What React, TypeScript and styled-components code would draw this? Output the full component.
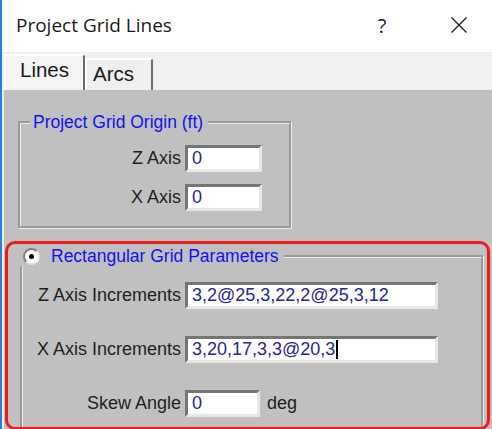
import React from "react";
import styled, { createGlobalStyle } from "styled-components";

const GlobalStyle = createGlobalStyle`
  html, body {
    margin: 0;
    padding: 0;
    background: #fff;
  }
  body {
    width: 492px;
    height: 429px;
    overflow: hidden;
  }
`;

const Window = styled.div`
  width: 492px;
  height: 429px;
  box-sizing: border-box;
  border-left: 2px solid #2b7fe0;
  display: flex;
  flex-direction: column;
  overflow: hidden;
  font-family: "Liberation Sans", Arial, sans-serif;
`;

const TitleBar = styled.div`
  height: 50px;
  flex: none;
  display: flex;
  align-items: center;
  padding: 0 3px 2px 14px;
  background: #fff;
`;

const Title = styled.div`
  flex: 1;
  font-family: "Open Sans", "Noto Sans", sans-serif;
  font-size: 19px;
  color: #1b1b1b;
`;

const CaptionButtons = styled.div`
  display: flex;
  gap: 17px;
`;

const CaptionButton = styled.div`
  width: 60px;
  height: 30px;
  display: flex;
  align-items: center;
  justify-content: center;
  font-family: "Open Sans", "Noto Sans", sans-serif;
  font-size: 20px;
  color: #222;
`;

const TabStrip = styled.div`
  height: 38px;
  flex: none;
  display: flex;
  align-items: flex-end;
  padding-left: 2px;
  background: #f0f0f0;
`;

const Tab = styled.div<{ $active?: boolean; $width: number }>`
  box-sizing: border-box;
  width: ${(p) => p.$width}px;
  height: ${(p) => (p.$active ? 36 : 32)}px;
  padding: 2px 0 0 ${(p) => (p.$active ? 14 : 6)}px;
  background: ${(p) => (p.$active ? "#f4f4f4" : "#efefef")};
  border-top: 2px solid #fff;
  border-left: 2px solid #fff;
  border-right: 2px solid #6c6c6c;
  border-top-right-radius: 3px;
  font-size: 20.5px;
  color: #1a1a1a;
`;

const Panel = styled.div`
  flex: 1;
  background: #c0c0c0;
  border-left: 2px solid #ececec;
  padding-top: 22px;
  display: flex;
  flex-direction: column;
  align-items: flex-start;
`;

const GroupBox = styled.fieldset<{ $width: number; $left: number }>`
  box-sizing: border-box;
  width: ${(p) => p.$width}px;
  margin: 0 0 0 ${(p) => p.$left}px;
  padding: ${(p) => (p.$left > 13 ? "13px 0 15px 0" : "16px 0 15px 0")};
  border: 3px groove #ededed;
  min-width: 0;
`;

const Legend = styled.legend<{ $offset: number }>`
  display: flex;
  align-items: center;
  gap: 11px;
  height: 20px;
  margin-left: ${(p) => p.$offset}px;
  padding: 0 5px 0 3px;
  background: #c0c0c0;
  font-size: 17.5px;
  color: #1010f4;
`;

const Radio = styled.span`
  box-sizing: border-box;
  width: 17px;
  height: 17px;
  border-radius: 50%;
  border: 2px solid;
  border-color: #7f7f7f #e6e6e6 #e6e6e6 #7f7f7f;
  background: #fff;
  display: flex;
  align-items: center;
  justify-content: center;

  &::after {
    content: "";
    width: 5px;
    height: 5px;
    border-radius: 50%;
    background: #000;
  }
`;

const Rows = styled.div<{ $gap: number; $labelWidth: number }>`
  display: grid;
  grid-template-columns: ${(p) => p.$labelWidth}px auto;
  column-gap: 4px;
  row-gap: ${(p) => p.$gap}px;
  align-items: center;
  justify-content: start;
`;

const Label = styled.div`
  text-align: right;
  font-size: 18px;
  color: #1e1e1e;
  white-space: nowrap;
`;

const Field = styled.div<{ $width: number }>`
  box-sizing: border-box;
  width: ${(p) => p.$width}px;
  height: 27px;
  border: 3px solid;
  border-color: #757575 #e8e8e8 #e8e8e8 #757575;
  background: #fff;
  padding: 0 4px;
  display: flex;
  align-items: center;
  font-size: 18px;
  color: #26269e;
  white-space: nowrap;
  overflow: hidden;
`;

const Caret = styled.span`
  display: inline-block;
  width: 1.5px;
  height: 19px;
  margin-left: 1px;
  background: #000;
`;

const FieldWithUnit = styled.div`
  display: flex;
  align-items: center;
  gap: 7px;
`;

const Unit = styled.span`
  font-size: 18px;
  color: #1e1e1e;
`;

const Highlight = styled.div`
  box-sizing: border-box;
  width: 485px;
  height: 189px;
  margin: 12px 0 0 1px;
  padding: 2px 3px 0 12px;
  border: 3px solid #ee1c1c;
  border-radius: 10px;
  overflow: hidden;
`;

const CloseIcon = () => (
  <svg width="18" height="18" viewBox="0 0 18 18">
    <path d="M1.5 1.5 L16.5 16.5 M16.5 1.5 L1.5 16.5" stroke="#222" strokeWidth="1.4" fill="none" />
  </svg>
);

export default function App() {
  return (
    <>
      <GlobalStyle />
      <Window>
        <TitleBar>
          <Title>Project Grid Lines</Title>
          <CaptionButtons>
            <CaptionButton>?</CaptionButton>
            <CaptionButton>
              <CloseIcon />
            </CaptionButton>
          </CaptionButtons>
        </TitleBar>

        <TabStrip>
          <Tab $active $width={81}>Lines</Tab>
          <Tab $width={68}>Arcs</Tab>
        </TabStrip>

        <Panel>
          <GroupBox $width={274} $left={14}>
            <Legend $offset={9}>Project Grid Origin (ft)</Legend>
            <Rows $gap={12} $labelWidth={160}>
              <Label>Z Axis</Label>
              <Field $width={77}>0</Field>
              <Label>X Axis</Label>
              <Field $width={77}>0</Field>
            </Rows>
          </GroupBox>

          <Highlight>
            <GroupBox $width={464} $left={0}>
              <Legend $offset={-3}>
                <Radio />
                Rectangular Grid Parameters
              </Legend>
              <Rows $gap={27} $labelWidth={158}>
                <Label>Z Axis Increments</Label>
                <Field $width={253}>3,2@25,3,22,2@25,3,12</Field>
                <Label>X Axis Increments</Label>
                <Field $width={253}>
                  3,20,17,3,3@20,3
                  <Caret />
                </Field>
                <Label>Skew Angle</Label>
                <FieldWithUnit>
                  <Field $width={75}>0</Field>
                  <Unit>deg</Unit>
                </FieldWithUnit>
              </Rows>
            </GroupBox>
          </Highlight>
        </Panel>
      </Window>
    </>
  );
}
